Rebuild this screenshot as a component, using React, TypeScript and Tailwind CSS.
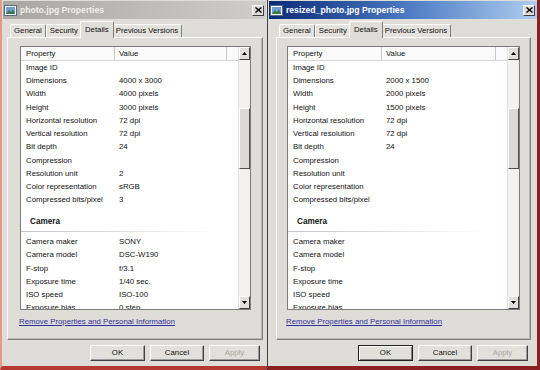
import React from "react";

type Row = [string, string];

const font = "font-['Liberation_Sans',Arial,sans-serif]";

const leftImage: Row[] = [
  ["Image ID", ""],
  ["Dimensions", "4000 x 3000"],
  ["Width", "4000 pixels"],
  ["Height", "3000 pixels"],
  ["Horizontal resolution", "72 dpi"],
  ["Vertical resolution", "72 dpi"],
  ["Bit depth", "24"],
  ["Compression", ""],
  ["Resolution unit", "2"],
  ["Color representation", "sRGB"],
  ["Compressed bits/pixel", "3"],
];

const leftCamera: Row[] = [
  ["Camera maker", "SONY"],
  ["Camera model", "DSC-W190"],
  ["F-stop", "f/3.1"],
  ["Exposure time", "1/40 sec."],
  ["ISO speed", "ISO-100"],
  ["Exposure bias", "0 step"],
];

const rightImage: Row[] = [
  ["Image ID", ""],
  ["Dimensions", "2000 x 1500"],
  ["Width", "2000 pixels"],
  ["Height", "1500 pixels"],
  ["Horizontal resolution", "72 dpi"],
  ["Vertical resolution", "72 dpi"],
  ["Bit depth", "24"],
  ["Compression", ""],
  ["Resolution unit", ""],
  ["Color representation", ""],
  ["Compressed bits/pixel", ""],
];

const rightCamera: Row[] = [
  ["Camera maker", ""],
  ["Camera model", ""],
  ["F-stop", ""],
  ["Exposure time", ""],
  ["ISO speed", ""],
  ["Exposure bias", ""],
];

const PictureIcon = () => (
  <svg width="13" height="11" viewBox="0 0 13 11">
    <rect x="0.5" y="0.5" width="12" height="10" fill="#f4f8fc" stroke="#5a6a80" />
    <rect x="2" y="2" width="9" height="7" fill="#6fa0d8" />
    <path d="M2 9 L5 5 L7 7 L9 4.5 L11 9 Z" fill="#3a7a48" />
  </svg>
);

const CloseBtn = () => (
  <div className="w-[12px] h-[11px] bg-[#dedcd6] border border-t-white border-l-white border-r-[#404040] border-b-[#404040] flex items-center justify-center">
    <svg width="7" height="6" viewBox="0 0 7 6">
      <path d="M0.5 0.5 L6.5 5.5 M6.5 0.5 L0.5 5.5" stroke="#000" strokeWidth="1.4" />
    </svg>
  </div>
);

const Tab = ({ label, selected }: { label: string; selected?: boolean }) =>
  selected ? (
    <div className="h-[17px] -mx-[2px] px-[4px] bg-[#dfddd7] border border-b-0 border-t-white border-l-white border-r-[#808080] rounded-t-[2px] flex items-center relative z-10 -mb-px">
      {label}
    </div>
  ) : (
    <div className="h-[13px] px-[3px] bg-[#e4e2dc] border border-b-0 border-t-white border-l-white border-r-[#808080] rounded-t-[2px] flex items-center">
      {label}
    </div>
  );

const Button = ({ label, w, dim, isDefault }: { label: string; w: string; dim?: boolean; isDefault?: boolean }) => (
  <div
    className={`${w} h-[16px] flex items-center justify-center bg-[#e2e0da] border ${
      isDefault ? "border-[#202020] shadow-[inset_1px_1px_0_#fff,inset_-1px_-1px_0_#808080]" : "border-t-white border-l-white border-r-[#404040] border-b-[#404040] shadow-[inset_-1px_-1px_0_#9a9a9a]"
    } ${dim ? "text-[#a8a6a0]" : "text-[#111]"}`}
  >
    {label}
  </div>
);

const ListRow = ({ row }: { row: Row }) => (
  <div className="h-[13.25px] flex items-center whitespace-nowrap shrink-0">
    <span className="w-[94px] pl-[5px]">{row[0]}</span>
    <span className="pl-[4px]">{row[1]}</span>
  </div>
);

function PropWindow({
  title,
  active,
  image,
  camera,
  outer,
  body,
  list,
}: {
  title: string;
  active?: boolean;
  image: Row[];
  camera: Row[];
  outer: string;
  body: string;
  list: string;
}) {
  return (
    <div className={`flex flex-col h-full bg-[#dfddd7] ${outer}`}>
      <div
        className={`h-[18px] mt-px flex items-center pl-[1px] pr-[2px] gap-[3px] ${
          active
            ? "bg-gradient-to-r from-[#0c2a78] via-[#4a78c0] to-[#aecdf0] text-white"
            : "bg-gradient-to-r from-[#a9a7a3] to-[#d0cec9] text-[#f0efec]"
        }`}
      >
        <PictureIcon />
        <span className="text-[8.6px] font-bold flex-1">{title}</span>
        <CloseBtn />
      </div>

      <div className={`flex flex-col flex-1 ${body}`}>
        <div className="h-[18px] flex items-end pl-[3px] text-[7.8px] text-[#111]">
          <Tab label="General" />
          <Tab label="Security" />
          <Tab label="Details" selected />
          <Tab label="Previous Versions" />
        </div>

        <div className={`h-[303px] border border-t-white border-l-white border-r-[#808080] border-b-[#808080] shadow-[inset_-1px_-1px_0_#b8b6b0] flex flex-col pt-[8px] ${list}`}>
          <div className="h-[264px] flex border border-[#7c7c7c] bg-white text-[7.8px] text-[#111]">
            <div className="flex-1 flex flex-col overflow-hidden">
              <div className="h-[14px] shrink-0 flex border-b border-[#d6d6d6] bg-[#fbfbfb]">
                <div className="w-[94px] pl-[5px] flex items-center border-r border-[#c8c8c8]">Property</div>
                <div className="flex-1 pl-[4px] flex items-center border-r border-[#c8c8c8]">Value</div>
                <div className="w-[11px]" />
              </div>
              {image.map((r) => (
                <ListRow key={r[0]} row={r} />
              ))}
              <div className="h-[28.5px] shrink-0 flex flex-col pt-[10px]">
                <span className="pl-[9px] font-bold text-[8.2px] leading-[10px]">Camera</span>
                <div className="mt-[4px] h-px w-[195px] bg-gradient-to-r from-[#c4c6cc] via-[#dcdde0] to-white" />
              </div>
              {camera.map((r) => (
                <ListRow key={r[0]} row={r} />
              ))}
            </div>
            <div className="w-[12px] flex flex-col bg-[#f3f2ef] border-l border-[#e0e0e0]">
              <div className="h-[13px] bg-[#e2e0da] border border-t-white border-l-white border-r-[#404040] border-b-[#404040] flex items-center justify-center">
                <svg width="5" height="3" viewBox="0 0 5 3"><path d="M0 3 L2.5 0 L5 3 Z" fill="#000" /></svg>
              </div>
              <div className="h-[48px]" />
              <div className="h-[61px] bg-[#dcdad4] border border-t-white border-l-white border-r-[#505050] border-b-[#505050]" />
              <div className="flex-1" />
              <div className="h-[13px] bg-[#e2e0da] border border-t-white border-l-white border-r-[#404040] border-b-[#404040] flex items-center justify-center">
                <svg width="5" height="3" viewBox="0 0 5 3"><path d="M0 0 L5 0 L2.5 3 Z" fill="#000" /></svg>
              </div>
            </div>
          </div>
          <div className="mt-[6px] pl-[-1px] -ml-[1px] text-[7.8px] text-[#30309a] underline">
            Remove Properties and Personal Information
          </div>
        </div>

        <div className="flex justify-end gap-[5px] pt-[5px] pr-[3px] text-[7.8px]">
          <Button label="OK" w="w-[55px]" isDefault={active} />
          <Button label="Cancel" w="w-[54px]" />
          <Button label="Apply" w="w-[51px]" dim />
        </div>
      </div>
    </div>
  );
}

export default function App() {
  return (
    <div className={`w-[540px] h-[370px] flex bg-[#dfddd7] overflow-hidden ${font}`}>
      <PropWindow
        title="photo.jpg Properties"
        image={leftImage}
        camera={leftCamera}
        outer="w-[267px] border-l-2 border-b-4 border-l-[#e49a88] border-b-[#b23a30] pl-[1px] pr-[1px]"
        body="pl-[4px] pr-[3px]"
        list="pl-[12px] pr-[11px]"
      />
      <div className="w-px h-full bg-[#404040]" />
      <PropWindow
        title="resized_photo.jpg Properties"
        active
        image={rightImage}
        camera={rightCamera}
        outer="w-[272px] border-r-[3px] border-b-4 border-r-[#8a2020] border-b-[#8a2020] pl-[1px]"
        body="pl-[7px] pr-[6px]"
        list="pl-[10px] pr-[10px]"
      />
    </div>
  );
}
